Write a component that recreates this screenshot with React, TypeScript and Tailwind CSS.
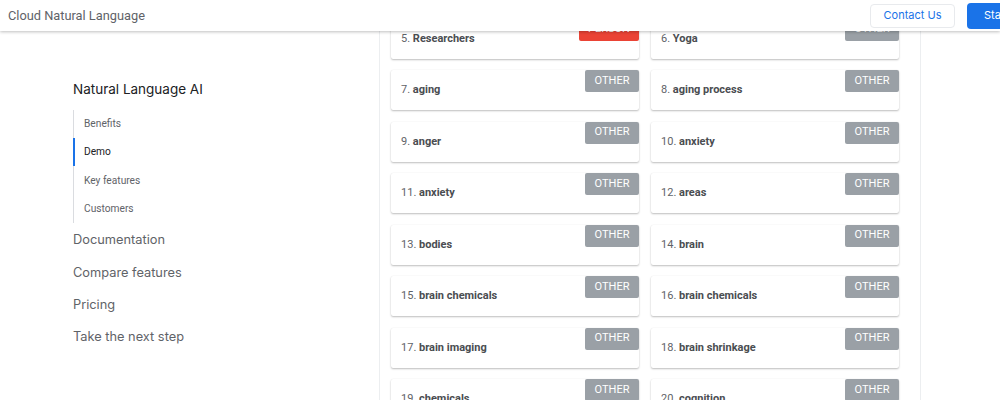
import React from "react";

const items: { n: number; t: string; tag: string }[] = [
  { n: 5, t: "Researchers", tag: "PERSON" },
  { n: 6, t: "Yoga", tag: "OTHER" },
  { n: 7, t: "aging", tag: "OTHER" },
  { n: 8, t: "aging process", tag: "OTHER" },
  { n: 9, t: "anger", tag: "OTHER" },
  { n: 10, t: "anxiety", tag: "OTHER" },
  { n: 11, t: "anxiety", tag: "OTHER" },
  { n: 12, t: "areas", tag: "OTHER" },
  { n: 13, t: "bodies", tag: "OTHER" },
  { n: 14, t: "brain", tag: "OTHER" },
  { n: 15, t: "brain chemicals", tag: "OTHER" },
  { n: 16, t: "brain chemicals", tag: "OTHER" },
  { n: 17, t: "brain imaging", tag: "OTHER" },
  { n: 18, t: "brain shrinkage", tag: "OTHER" },
  { n: 19, t: "chemicals", tag: "OTHER" },
  { n: 20, t: "cognition", tag: "OTHER" },
];

function Card({ n, t, tag }: { n: number; t: string; tag: string }) {
  return (
    <div className="relative h-[40px] bg-white rounded-[2px] shadow-[0_1px_2px_rgba(0,0,0,0.25),0_0_1px_rgba(0,0,0,0.08)] flex items-center pl-[10px]">
      <span className="text-[11px] text-[#5f6368] font-['Roboto',sans-serif] mt-[1px] whitespace-nowrap">
        {n}. <span className="font-bold text-[#4a4d51]">{t}</span>
      </span>
      <span
        className={
          "absolute top-0 right-0 h-[22px] rounded-[2px] flex items-center justify-center text-white text-[11px] font-['Roboto',sans-serif] " +
          (tag === "PERSON" ? "w-[60px] bg-[#ea4335]" : "w-[54px] bg-[#9aa0a6]")
        }
      >
        {tag}
      </span>
    </div>
  );
}

export default function App() {
  return (
    <div className="w-[1000px] h-[400px] overflow-hidden bg-white font-['Roboto',sans-serif] flex flex-col">
      <header className="relative z-10 h-[31px] shrink-0 bg-white shadow-[0_1px_3px_rgba(0,0,0,0.25)] flex items-center pl-[8px]">
        <span className="text-[12.8px] text-[#5f6368] font-['Roboto',sans-serif]">Cloud Natural Language</span>
        <div className="ml-auto flex items-center gap-[12px] overflow-visible">
          <button className="h-[24px] w-[85px] rounded-[4px] bg-white border border-[#e8eaed] text-[#1a73e8] text-[11px] font-['Inter',sans-serif] whitespace-nowrap">
            Contact Us
          </button>
          <button className="h-[26px] w-[33px] shrink-0 rounded-l-[4px] bg-[#1a73e8] text-white text-[11px] font-['Inter',sans-serif] text-left pl-[17px] whitespace-nowrap overflow-hidden">
            Start
          </button>
        </div>
      </header>
      <div className="flex flex-1 -mt-[12.5px]">
        <nav className="w-[379px] shrink-0 pl-[73px] pt-[61px] font-['Inter',sans-serif]">
          <div className="text-[13.5px] text-[#202124] leading-[18px]">Natural Language AI</div>
          <ul className="mt-[12px] border-l border-[#dadce0]">
            {["Benefits", "Demo", "Key features", "Customers"].map((s) => (
              <li
                key={s}
                className={
                  "h-[28.3px] flex items-center pl-[9px] text-[10.2px] font-['Roboto',sans-serif] -ml-px border-l-2 " +
                  (s === "Demo" ? "border-[#1a73e8] text-[#202124]" : "border-transparent text-[#5f6368]")
                }
              >
                {s}
              </li>
            ))}
          </ul>
          <div className="mt-[1px] flex flex-col text-[12.8px] text-[#5f6368]">
            {["Documentation", "Compare features", "Pricing", "Take the next step"].map((s) => (
              <div key={s} className="h-[32.3px] flex items-center">
                {s}
              </div>
            ))}
          </div>
        </nav>
        <section className="w-[542px] shrink-0 border-x border-[#eceef0] pl-[11px] pr-[21px]">
          <div className="grid grid-cols-2 gap-x-[12px] gap-y-[11.5px]">
            {items.map((it) => (
              <Card key={it.n} {...it} />
            ))}
          </div>
        </section>
      </div>
    </div>
  );
}
